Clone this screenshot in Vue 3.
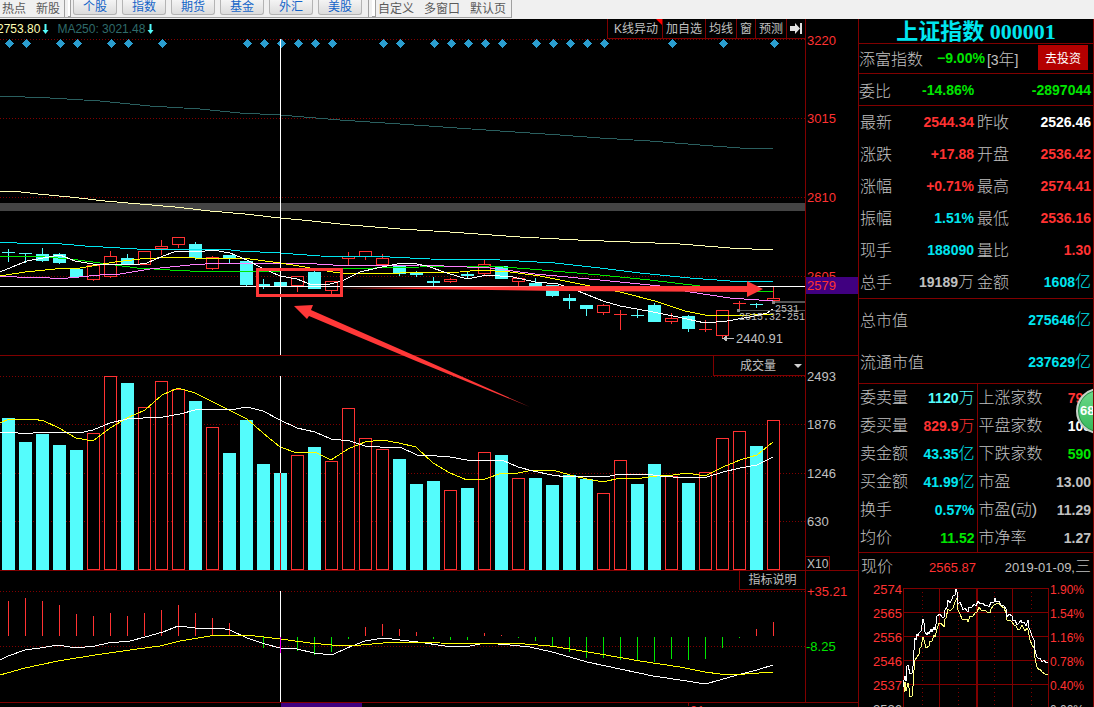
<script setup>
import { ref } from 'vue'

const markets = ['个股', '指数', '期货', '基金', '外汇', '美股']
const chartTools = ['加自选', '均线', '窗', '预测']
const panelType = ref('成交量')

const STEP = 17
const slot = (i) => 8 + i * STEP

const signals = [0, 1, 3, 4, 6, 7, 9, 14, 15, 16, 17, 18, 19, 22, 23, 25, 26, 27, 28, 29, 31, 32, 33, 34, 35, 39, 42, 45]

// [up, body top, body bottom, high, low]
const candles = [
  [0, 252, 253, 249, 262], [0, 253, 254, 253, 263], [0, 254, 261, 248, 262], [0, 254, 263, 253, 264],
  [0, 269, 277, 269, 278], [1, 265, 280, 265, 281], [1, 256, 277, 251, 278], [0, 258, 264, 254, 265],
  [1, 251, 265, 251, 265], [1, 246, 249, 240, 255], [1, 237, 245, 237, 248], [0, 244, 258, 242, 260],
  [1, 257, 269, 256, 270], [0, 255, 259, 255, 263], [0, 261, 285, 261, 287], [0, 284, 286, 279, 289],
  [0, 282, 286, 280, 289], [1, 276, 286, 276, 292], [0, 272, 289, 271, 289], [1, 281, 291, 281, 294],
  [1, 256, 259, 252, 266], [1, 251, 257, 251, 260], [1, 258, 265, 254, 267], [0, 265, 274, 265, 276],
  [0, 273, 275, 271, 277], [0, 281, 283, 277, 286], [1, 279, 282, 278, 283], [0, 274, 276, 272, 278],
  [1, 264, 274, 259, 276], [0, 266, 279, 266, 279], [1, 278, 282, 277, 286], [0, 283, 286, 278, 286],
  [0, 285, 296, 285, 297], [0, 298, 301, 294, 309], [0, 305, 309, 305, 316], [1, 305, 313, 304, 315],
  [1, 314, 315, 310, 330], [0, 315, 316, 310, 318], [0, 305, 322, 303, 322], [1, 318, 322, 313, 324],
  [0, 316, 329, 315, 332], [1, 329, 330, 320, 332], [1, 310, 336, 310, 339], [1, 303, 304, 301, 309],
  [0, 304, 305, 303, 308], [1, 298, 301, 287, 301]
]

const volumeTops = [
  418, 442, 434, 445, 450, 433, 376, 383, 407, 381, 389, 401, 427, 453, 420, 464, 473, 455, 447, 461, 408, 438, 449,
  459, 484, 481, 490, 488, 452, 455, 478, 478, 485, 475, 479, 493, 460, 484, 464, 476, 483, 472, 438, 431, 446, 420
]

// bar ends; above 636 is positive, below is negative
const macd = [
  601, 598, 601, 605, 614, 616, 613, 616, 613, 610, 605, 613, 618, 623, 636, 648, 653, 651, 655, 652, 639, 627, 624,
  629, 632, 639, 640, 640, 633, 635, 638, 641, 646, 652, 658, 658, 660, 660, 662, 659, 660, 659, 648, 638, 629, 622
]

const priceLines = [
  ['#2a5f5f', '0,96 50,98 100,101 150,106 200,109 240,113 280,115 340,120 400,124 500,131 560,135 600,138 650,141 700,145 740,148 773,149'],
  ['#ffffb4', '0,191 13,191 38,194 70,197 105,201 140,204 175,207 210,211 245,214 280,218 302,220 350,225 400,229 450,232 520,237 578,240 630,242 680,244 730,248 773,250'],
  ['#00e6f0', '0,242 17,243 51,243 85,246 120,248 137,249 221,249 240,251 280,253 320,256 390,257 430,259 500,260 555,263 600,268 640,273 690,278 730,281 773,281'],
  ['#00e600', '0,256 33,256 70,259 100,263 137,268 170,270 190,271 280,271 340,269 375,268 420,267 490,266 530,269 600,275 650,280 700,286 740,290 773,292'],
  ['#ff80ff', '0,276 17,277 50,278 68,278 100,275 120,274 150,269 190,265 221,263 300,263 350,266 420,265 490,268 535,274 600,280 660,286 690,292 730,298 773,301'],
  ['#ffff00', '0,276 25,272 55,269 80,268 115,262 140,259 175,257 195,258 235,258 250,259 280,263 305,267 320,270 340,273 400,273 460,272 480,270 510,272 540,276 590,286 620,292 655,301 685,311 705,315 750,315 773,314'],
  ['#ffffff', '0,272 17,265 27,261 43,258 60,255 75,261 93,264 113,264 133,265 147,263 163,256 177,251 197,252 213,250 230,253 247,260 260,267 280,276 297,279 312,285 330,284 342,281 360,272 377,268 397,264 412,263 427,266 447,273 467,279 487,275 513,277 535,282 558,284 578,291 603,301 620,306 648,311 673,316 687,319 705,323 727,321 750,317 767,313 773,309']
]

const volumeLines = [
  ['#ffff00', '0,423 9,419 33,419 44,421 59,428 76,438 93,441 110,428 127,418 145,410 162,395 178,388 195,393 229,410 247,419 263,433 280,447 297,453 315,452 331,460 348,449 365,442 382,440 399,443 416,447 433,463 450,473 467,480 485,479 502,473 518,473 533,470 553,470 570,475 587,479 603,482 620,478 642,478 657,476 673,475 687,473 705,476 723,467 740,460 757,455 773,442'],
  ['#ffffff', '0,432 15,432 18,433 33,433 37,432 67,432 79,433 93,430 110,423 127,419 143,418 163,417 180,414 195,410 210,409 230,410 247,407 263,411 280,420 297,428 315,432 331,439 350,441 365,446 380,447 400,447 417,455 437,456 450,457 467,460 480,461 502,460 518,467 533,471 552,475 567,477 593,476 605,477 620,474 645,474 660,476 673,477 687,478 707,477 723,472 740,468 757,465 773,457']
]

const macdLines = [
  ['#ffffff', '0,660 8,656 25,650 40,648 58,645 76,648 95,646 108,643 130,641 145,637 163,632 178,626 195,628 220,628 230,630 247,638 265,644 280,648 297,649 314,653 332,655 347,648 365,641 383,638 400,640 418,642 445,646 470,646 485,643 510,645 530,647 552,652 570,657 587,662 620,669 653,676 687,681 705,684 720,680 737,675 757,670 773,665'],
  ['#ffff00', '0,675 25,668 58,661 95,655 130,650 160,646 180,641 210,636 225,635 247,635 280,639 310,643 332,645 350,646 383,643 410,642 440,643 525,644 550,646 570,649 600,654 640,661 680,667 705,672 720,674 745,674 773,672']
]

const quotes = [
  ['最新', '2544.34', 'red', '昨收', '2526.46', 'white'],
  ['涨跌', '+17.88', 'red', '开盘', '2536.42', 'red'],
  ['涨幅', '+0.71%', 'red', '最高', '2574.41', 'red'],
  ['振幅', '1.51%', 'cyan', '最低', '2536.16', 'red'],
  ['现手', '188090', 'cyan', '量比', '1.30', 'red'],
  ['总手', '19189万', 'grey', '金额', '1608亿', 'cyan']
]
const caps = [['总市值', '275646亿'], ['流通市值', '237629亿']]
const breadth = [
  ['委卖量', '1120万', 'aqua', '上涨家数', '791', 'red'],
  ['委买量', '829.9万', 'red', '平盘家数', '108', 'white'],
  ['卖金额', '43.35亿', 'cyan', '下跌家数', '590', 'green'],
  ['买金额', '41.99亿', 'cyan', '市盈', '13.00', 'grey'],
  ['换手', '0.57%', 'cyan', '市盈(动)', '11.29', 'grey'],
  ['均价', '11.52', 'green', '市净率', '1.27', 'grey']
]
const split = (v) => v.match(/^([^万亿]+)(.*)$/)

const minuteWhite = '0,99 1,92 2,88 3,93 4,78 5,77 7,86 9,85 10,78 11,62 12,50 13,52 14,46 15,48 16,45 18,43 20,31 21,35 22,44 24,47 25,44 26,46 28,41 29,44 31,39 32,42 33,36 34,28 37,26 39,29 41,29 42,22 44,19 45,12 47,15 49,11 50,8 52,7 53,1 54,4 55,16 57,14 59,19 60,22 62,20 65,24 66,19 69,19 71,16 73,18 75,13 77,16 80,15 82,18 84,17 86,19 88,14 91,14 92,10 93,14 96,13 98,17 101,18 103,21 104,29 106,26 109,28 110,33 112,32 114,37 116,35 118,32 119,35 121,34 123,38 125,32 126,40 127,42 129,48 131,52 132,62 134,69 136,71 137,70 139,74 141,72 143,75 145,74'
const minuteYellow = '1,104 2,94 3,103 5,95 6,100 7,109 9,108 10,98 11,82 12,72 14,69 16,66 17,60 18,59 20,49 21,52 23,60 26,58 27,53 29,53 31,47 32,49 34,41 36,35 38,35 41,39 42,31 43,30 45,21 47,23 50,20 52,14 54,10 55,22 57,26 59,31 62,32 64,31 65,34 67,28 70,28 72,25 74,24 76,19 78,22 82,22 84,24 87,25 88,21 91,17 93,16 96,15 98,18 101,20 103,25 104,32 107,32 109,34 111,37 113,38 115,42 117,41 119,37 122,43 124,40 125,42 127,52 129,57 131,60 132,70 134,79 136,82 137,81 139,84 142,86 145,86'
</script>

<template>
  <div class="app">
    <nav class="toolbar">
      <div class="links plain">
        <a href="#">热点</a><a href="#">新股</a>
      </div>
      <i class="grip"></i>
      <div class="markets">
        <button v-for="m in markets" :key="m" type="button">{{ m }}</button>
      </div>
      <i class="grip second"></i>
      <div class="links wide">
        <a href="#">自定义</a><a href="#">多窗口</a><a href="#">默认页</a>
      </div>
    </nav>

    <main class="body">
      <section class="charts">
        <div class="panel price">
          <div class="plot">
            <svg class="canvas">
              <g transform="translate(0,-19)">
                <rect class="band" x="0" y="203" width="100%" height="8" />
                <line v-for="y in [39, 118, 197, 276]" :key="y" class="grid" x1="0" x2="100%" :y1="y + 0.5" :y2="y + 0.5" />
                <path v-for="i in signals" :key="'s' + i" class="signal" :d="`M${slot(i) + 1.5} 39l4.5 4.5l-4.5 4.5l-4.5 -4.5z`" />
                <g v-for="(c, i) in candles" :key="'c' + i" :class="c[0] ? 'up' : 'down'">
                  <line :x1="slot(i) + 0.5" :x2="slot(i) + 0.5" :y1="c[3]" :y2="c[0] && c[2] - c[1] > 1 ? c[1] : c[4]" />
                  <line :x1="slot(i) + 0.5" :x2="slot(i) + 0.5" :y1="c[2]" :y2="c[4]" />
                  <rect v-if="c[0] && c[2] - c[1] > 1" :x="slot(i) - 5.5" :y="c[1] + 0.5" width="12" :height="c[2] - c[1] - 1" />
                  <rect v-else class="solid" :x="slot(i) - 6" :y="c[1]" width="13" :height="c[2] - c[1]" />
                </g>
                <polyline v-for="l in priceLines" :key="l[0]" class="trace" :points="l[1]" :stroke="l[0]" />
                <line class="cross" x1="0" x2="100%" y1="286.5" y2="286.5" />
                <line class="cross" x1="280.5" x2="280.5" y1="39" y2="355" />
                <line class="mark" x1="773" x2="100%" y1="302" y2="302" stroke-width="2" />
                <line class="mark" x1="738" x2="100%" y1="310.5" y2="310.5" />
                <rect class="dot" x="772" y="301" width="3" height="3" />
                <rect class="dot" x="737" y="309" width="3" height="3" />
                <text class="mono" x="775" y="312">2531</text>
                <text class="mono" x="739" y="320">2515.32-251</text>
                <path class="low" d="M734 338.5H723M727 336l-4 2.5l4 2.5" />
                <text class="lowtext" x="736" y="343">2440.91</text>
              </g>
            </svg>
            <div class="legend">
              <span class="ma-y">2753.80</span>
              <svg width="7" height="11"><path d="M2.500 0h2V6h2L3.500 10L0.500 6h2z" /></svg>
              <span class="ma-t">MA250: 3021.48</span>
              <svg width="7" height="11"><path d="M2.500 0h2V6h2L3.500 10L0.500 6h2z" /></svg>
            </div>
            <div class="tools">
              <button type="button" class="flag">K线异动</button>
              <button v-for="t in chartTools" :key="t" type="button">{{ t }}</button>
              <button type="button" class="next" aria-label="next">
                <svg width="12" height="13"><path d="M0 4H5V1L10 6.500L5 12V9H0zM10 1h2v11h-2z" /></svg>
              </button>
            </div>
          </div>
          <svg class="axis">
            <g class="red-text">
              <text x="1" y="26">3220</text><text x="1" y="104">3015</text>
              <text x="1" y="183">2810</text><text x="1" y="262">2605</text>
              <rect class="tag" x="0" y="258" width="52" height="17" />
              <text x="1" y="271">2579</text>
            </g>
          </svg>
        </div>

        <div class="panel volume">
          <div class="plot">
            <svg class="canvas">
              <g transform="translate(0,-356)">
                <line v-for="y in [376, 424, 473, 521]" :key="y" class="grid" x1="0" x2="100%" :y1="y + 0.5" :y2="y + 0.5" />
                <template v-for="(v, i) in volumeTops" :key="i">
                  <rect v-if="candles[i][0]" class="vol-up" :x="slot(i) - 5.5" :y="v + 0.5" width="12" :height="569 - v" />
                  <rect v-else class="vol-down" :x="slot(i) - 6" :y="v" width="13" :height="570 - v" />
                </template>
                <polyline v-for="l in volumeLines" :key="l[0]" class="trace" :points="l[1]" :stroke="l[0]" />
                <line class="cross" x1="280.5" x2="280.5" y1="376" y2="473" />
                <line class="cross inv" x1="280.5" x2="280.5" y1="473" y2="570" />
              </g>
            </svg>
            <label class="picker">
              <select v-model="panelType" aria-label="指标"><option>成交量</option></select>
              <svg width="8" height="4"><path d="M0 0H8L4 4z" /></svg>
            </label>
          </div>
          <svg class="axis">
            <g class="grey-text">
              <text x="1" y="25">2493</text><text x="1" y="73">1876</text>
              <text x="1" y="122">1246</text><text x="1" y="170">630</text>
              <rect class="unit" x="-0.5" y="200.5" width="24" height="14" />
              <text class="small" x="1" y="212">X10</text>
            </g>
          </svg>
        </div>

        <div class="panel macd">
          <div class="plot">
            <svg class="canvas">
              <g transform="translate(0,-571)">
                <line v-for="y in [591, 646]" :key="y" class="grid" x1="0" x2="100%" :y1="y + 0.5" :y2="y + 0.5" />
                <line v-for="(v, i) in macd" :key="i" :class="v <= 636 ? 'pos' : 'neg'" :x1="slot(i) + 0.5" :x2="slot(i) + 0.5" :y1="v <= 636 ? 636 : 637" :y2="v" />
                <polyline v-for="l in macdLines" :key="l[0]" class="trace" :points="l[1]" :stroke="l[0]" />
                <line class="cross" x1="280.5" x2="280.5" y1="591" y2="702" />
                <line class="cross hit" x1="280.5" x2="280.5" y1="637" y2="653" />
              </g>
            </svg>
            <button type="button" class="explain">指标说明</button>
          </div>
          <svg class="axis">
            <text class="red" x="1" y="25">+35.21</text>
            <text class="green" x="0" y="80">-8.25</text>
          </svg>
        </div>

        <svg class="dates">
          <rect class="cursor" x="281" y="0" width="81" height="8" />
          <line x1="688.5" x2="688.5" y1="0" y2="3" />
          <text x="690" y="12">01</text>
        </svg>

        <svg class="annotation">
          <g transform="translate(0,-19)">
            <rect x="257.500" y="269.500" width="84" height="26" />
            <path d="M294 306L313 305L311 310L420 358L530 407L416 361L309 316L307 319z" />
            <path d="M338 288L560 286L747 286V281L763 289L747 297V292L560 291z" />
          </g>
        </svg>
      </section>

      <aside class="side">
        <h1>上证指数 000001</h1>
        <div class="row fund">
          <span class="name">添富指数</span>
          <b class="green">−9.00%</b>
          <span class="term">[3<span class="name">年</span>]</span>
          <button type="button">去投资</button>
        </div>
        <div class="row ratio">
          <span class="name">委比</span>
          <b class="green">-14.86%</b>
          <b class="green end">-2897044</b>
        </div>
        <table class="quotes">
          <colgroup><col class="q1"><col class="q2"><col class="q3"><col></colgroup>
          <tbody>
            <tr v-for="r in quotes" :key="r[0]">
              <th scope="row">{{ r[0] }}</th>
              <td :class="r[2]"><b>{{ split(r[1])[1] }}</b>{{ split(r[1])[2] }}</td>
              <th scope="row">{{ r[3] }}</th>
              <td :class="r[5]"><b>{{ split(r[4])[1] }}</b>{{ split(r[4])[2] }}</td>
            </tr>
          </tbody>
        </table>
        <table class="caps">
          <tbody>
            <tr v-for="r in caps" :key="r[0]">
              <th scope="row">{{ r[0] }}</th>
              <td class="cyan"><b>{{ split(r[1])[1] }}</b>{{ split(r[1])[2] }}</td>
            </tr>
          </tbody>
        </table>
        <div class="breadth-box">
          <table class="breadth">
            <colgroup><col class="b1"><col class="b2"><col class="b3"><col></colgroup>
            <tbody>
              <tr v-for="r in breadth" :key="r[0]">
                <th scope="row">{{ r[0] }}</th>
                <td :class="r[2]"><b>{{ split(r[1])[1] }}</b>{{ split(r[1])[2] }}</td>
                <th scope="row" class="split">{{ r[3] }}</th>
                <td :class="r[5]"><b>{{ split(r[4])[1] }}</b>{{ split(r[4])[2] }}</td>
              </tr>
            </tbody>
          </table>
          <div class="badge">68</div>
        </div>
        <div class="now">
          <span class="name">现价</span>
          <span class="red num">2565.87</span>
          <span class="date">2019-01-09,<span class="name">三</span></span>
        </div>
        <div class="mini">
          <ul class="left">
            <li v-for="v in ['2574', '2565', '2556', '2546', '2537']" :key="v">{{ v }}</li>
            <li class="base">2526</li>
          </ul>
          <svg class="minute">
            <line v-for="k in 6" :key="'h' + k" x1="0" x2="100%" :y1="k * 24 - 23.5" :y2="k * 24 - 23.5" />
            <line v-for="p in [0.5, 36.5, 109.5, 145.5]" :key="p" :x1="p" :x2="p" y1="0" y2="121" />
            <line x1="74" x2="74" y1="0" y2="121" stroke-width="2" />
            <line v-for="p in [19.5, 55.5, 91.5, 128.5]" :key="p" class="dots" :x1="p" :x2="p" y1="0" y2="121" />
            <polyline :points="minuteYellow" stroke="#ffff80" />
            <polyline :points="minuteWhite" stroke="#ffffff" />
          </svg>
          <ul class="right">
            <li v-for="v in ['1.90%', '1.54%', '1.16%', '0.78%', '0.40%']" :key="v">{{ v }}</li>
            <li class="base">0.00%</li>
          </ul>
        </div>
      </aside>
    </main>
  </div>
</template>

<style>
body { margin: 0; background: #000; }
</style>

<style scoped>
.app {
  height: 100vh;
  display: flex;
  flex-direction: column;
  overflow: hidden;
  background: #000;
  color: #c0c0c0;
  font-family: "Liberation Sans", "Noto Sans CJK SC", sans-serif;
  font-size: 12px;
}
* { box-sizing: border-box; }
button, select { font: inherit; color: inherit; background: none; border: 0; padding: 0; margin: 0; }
a { color: inherit; text-decoration: none; }
svg { display: block; }

.toolbar { flex: none; height: 19px; display: flex; background: #f0f0f0; color: #5a5a5a; overflow: hidden; }
.links, .markets { display: flex; height: 18px; border-bottom: 1px solid #a0a0a0; line-height: 19px; }
.links.plain { width: 65px; padding-left: 2px; gap: 10px; border-right: 1px solid #a0a0a0; }
.links.wide { width: 134px; gap: 10px; border-right: 1px solid #a0a0a0; white-space: nowrap; }
.grip { width: 8px; height: 18px; border-bottom: 1px solid #a0a0a0; padding: 0 2px 2px 3px; }
.grip::before { content: ""; display: block; height: 16px; border-right: 1px solid #a0a0a0; border-bottom: 1px solid #a0a0a0; background: #fff; }
.grip.second { border-left: 1px solid #a0a0a0; width: 10px; }
.markets { gap: 5px; width: 295px; }
.markets button { width: 44px; height: 15px; flex: none; border: 1px solid #b4b4b4; border-top: 0; border-radius: 0 0 3px 3px; background: linear-gradient(#f4f4f4, #dcdcdc); color: #1464c8; line-height: 13px; }

.body { flex: 1; min-height: 0; display: flex; }
.charts { flex: 1; min-width: 0; position: relative; display: flex; flex-direction: column; }
.panel { display: flex; flex: none; border-bottom: 1px solid #800000; }
.price { height: 337px; }
.volume { height: 215px; }
.macd { height: 132px; }
.macd, .dates { overflow: hidden; }
.plot { flex: 1; min-width: 0; position: relative; border-right: 1px solid #800000; }
.canvas { width: 100%; height: 100%; overflow: hidden; shape-rendering: crispEdges; }
.axis { flex: none; width: 52px; height: 100%; font-size: 13px; }
.dates { width: 100%; height: 4px; }
.dates text { fill: #ff3232; font-size: 13px; }
.dates line { stroke: #800000; }
.cursor, .tag { fill: #400080; }

.band { fill: #444; }
.grid { stroke: #800000; stroke-dasharray: 1 2; }
.signal { fill: #2a9dce; }
.up line { stroke: #ff3232; }
.up rect { stroke: #ff3232; fill: none; }
.up .solid { fill: #ff3232; stroke: none; }
.down line { stroke: #54fcfc; }
.down rect { fill: #54fcfc; }
.trace { fill: none; }
.cross { stroke: #fff; }
.cross.inv { stroke: #c00000; }
.cross.hit { stroke: #ff00ff; }
.mark { stroke: #555; }
.dot { fill: #888; }
.mono { fill: #c0c0c0; font: 10px "Liberation Mono", monospace; }
.low { stroke: #c0c0c0; fill: #c0c0c0; }
.lowtext { fill: #c0c0c0; font-size: 13px; }
.vol-up { fill: #000; stroke: #ff3232; }
.vol-down { fill: #54fcfc; }
.pos { stroke: #ff3232; }
.neg { stroke: #00e600; }
.red-text text { fill: #ff3232; }
.grey-text text { fill: #c0c0c0; }
.grey-text .small { font-size: 12px; }
.unit { fill: none; stroke: #800000; }

.legend { position: absolute; left: -3px; top: 3px; display: flex; align-items: center; gap: 2px; line-height: 14px; white-space: nowrap; }
.legend svg path { fill: #54fcfc; }
.ma-y { color: #ffffb4; }
.ma-t { color: #2f6b6b; margin-left: 6px; }
.tools { position: absolute; right: 0; top: 0; display: flex; height: 20px; border-bottom: 1px solid #800000; background: #000; }
.tools button { border-left: 1px solid #800000; padding: 0 3px; line-height: 20px; white-space: nowrap; }
.tools .flag { position: relative; padding: 0 4px 0 6px; }
.tools .flag::after { content: ""; position: absolute; right: 0; top: 0; border-top: 6px solid #f00; border-left: 6px solid transparent; }
.tools .next path { fill: #e0e0e0; }

.picker { position: absolute; right: 0; top: 0; width: 92px; height: 20px; display: flex; align-items: center; border-left: 1px solid #800000; border-bottom: 1px solid #800000; background: #000; }
.picker select { appearance: none; flex: 1; padding-left: 26px; outline: 0; }
.picker svg { margin-right: 3px; }
.picker path { fill: #d0d0d0; }
.explain { position: absolute; right: 0; top: 0; width: 66px; height: 19px; border-left: 1px solid #800000; border-bottom: 1px solid #800000; background: #000; line-height: 19px; white-space: nowrap; }

.annotation { position: absolute; left: 0; top: 0; width: 100%; height: 100%; pointer-events: none; }
.annotation rect { fill: none; stroke: #ff3838; stroke-width: 3; }
.annotation path { fill: #ff3838; }

.side { flex: none; width: 236px; border-left: 1px solid #800000; border-right: 1px solid #800000; overflow: hidden; font-size: 16px; }
h1 { margin: 0; height: 24px; line-height: 25px; text-align: center; color: #00e6f0; font-family: "Liberation Serif", "Noto Sans CJK SC", serif; font-size: 22px; font-weight: 700; white-space: nowrap; }
b { font-size: 14px; font-weight: 700; }
.row { display: flex; align-items: center; border-top: 1px solid #800000; white-space: nowrap; }
.name { font-weight: 300; font-size: 16px; }
.fund { height: 30px; padding-bottom: 2px; }
.fund b { margin-left: 14px; }
.term { margin-left: 2px; font-size: 14px; }
.fund button { margin-left: auto; margin-right: 5px; width: 50px; height: 25px; background: #b40000; color: #fff; font-size: 12px; }
.ratio { height: 32px; }
.ratio b { margin-left: 31px; }
.ratio .end { margin-left: auto; margin-right: 2px; }
table { width: 100%; border-collapse: collapse; border-top: 1px solid #800000; table-layout: fixed; }
th, td { padding: 0; white-space: nowrap; font-weight: 300; vertical-align: middle; }
th { text-align: left; padding-left: 1px; }
td { text-align: right; padding-right: 2px; }
.quotes tr { height: 32px; line-height: 31px; }
.quotes .q1 { width: 48px; }
.quotes .q2 { width: 69px; }
.quotes .q3 { width: 48px; }
.caps tr { height: 41px; line-height: 41px; }
.breadth tr { height: 28px; line-height: 28px; }
.breadth .b1 { width: 50px; }
.breadth .b2 { width: 68px; }
.breadth .b3 { width: 66px; }
.split { border-left: 1px solid #800000; }
.breadth-box { position: relative; border-bottom: 1px solid #800000; }
.badge { position: absolute; left: 217px; top: 5px; width: 46px; height: 46px; border: 2px solid #c8d2c8; border-radius: 50%; box-shadow: inset 0 0 0 1px #2a8a4a; background: linear-gradient(#6cd98a, #35b85a); color: #fff; font-size: 13px; font-weight: 700; line-height: 41px; padding-left: 2px; }
.red { color: #ff3232; fill: #ff3232; }
.green { color: #00e600; fill: #00e600; }
.cyan { color: #00e6f0; }
.aqua { color: #54fcfc; }
.white { color: #fff; }
.grey { color: #c0c0c0; }
.now { height: 25px; padding: 3px 2px 0; display: flex; align-items: baseline; line-height: 22px; white-space: nowrap; }
.num { margin-left: 36px; font-size: 13px; }
.date { margin-left: auto; font-size: 13px; }
.mini { display: flex; font-size: 13px; color: #ff3232; }
.mini ul { list-style: none; margin: 0; padding: 0; line-height: 24px; }
.left { width: 44px; text-align: right; padding-right: 1px; }
.left li { padding-right: 1px; }
.right { width: 44px; }
.right li { padding-left: 1px; font-size: 12px; }
.base { color: #c0c0c0; }
.minute { flex: 1; min-width: 0; height: 132px; margin-top: 10px; shape-rendering: crispEdges; }
.minute line { stroke: #800000; }
.minute .dots { stroke-dasharray: 1 3; }
.minute polyline { fill: none; }
</style>
